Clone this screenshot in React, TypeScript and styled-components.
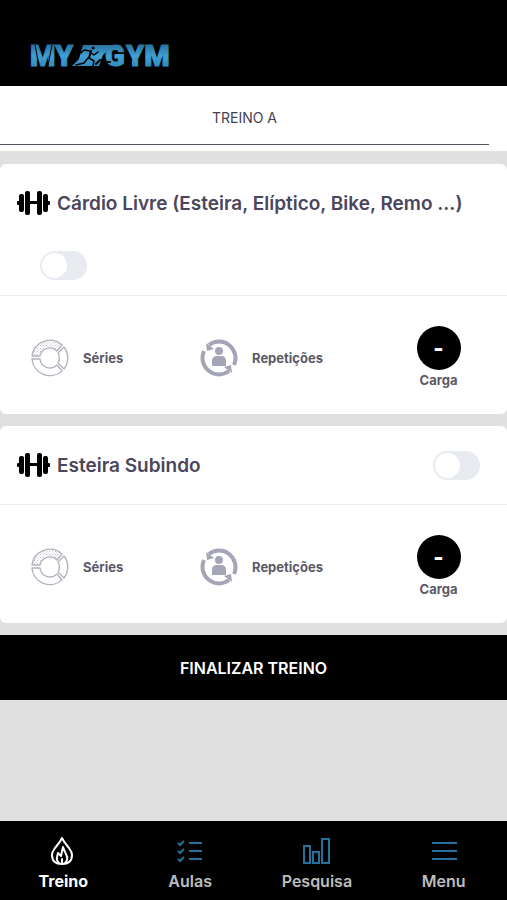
import React from "react";
import styled, { createGlobalStyle } from "styled-components";

const GlobalStyle = createGlobalStyle`
  *, *::before, *::after { box-sizing: border-box; }
  body {
    margin: 0;
    background: #e0e0e0;
    color: #4b465c;
    font-family: Inter, Roboto, "Liberation Sans", sans-serif;
  }
  button, input { font: inherit; }
`;

const Page = styled.div`
  min-height: 100vh;
  display: flex;
  flex-direction: column;
`;

const Header = styled.header`
  display: flex;
  align-items: flex-end;
  background: #000;
  height: 86px;
  padding: 0 28px 10px;
`;

const LogoSvg = styled.svg`
  display: block;
  font-family: Roboto, sans-serif;
  font-weight: 900;
  font-size: 29px;
`;

const Tabs = styled.nav`
  background: #fff;
  padding: 0 18px 6px 0;
`;

const Tab = styled.button`
  display: block;
  width: 100%;
  padding: 22px 0 16px;
  border: 0;
  border-bottom: 1px solid #55515f;
  background: none;
  color: #45424f;
  font-size: 14px;
  line-height: 20px;
  cursor: pointer;
`;

const Workout = styled.main`
  display: flex;
  flex-direction: column;
  gap: 12px;
  padding: 13px 0 12px;
`;

const Card = styled.section`
  background: #fff;
  border-radius: 6px;
`;

const CardHeader = styled.div`
  display: flex;
  flex-wrap: wrap;
  align-items: center;
  justify-content: space-between;
  padding: 0 27px 0 16px;
  border-bottom: 1px solid #ececee;
`;

const Title = styled.h2`
  display: flex;
  align-items: center;
  gap: 6px;
  min-height: 78px;
  margin: 0;
  font-size: 19px;
  line-height: 26px;
  font-weight: 600;
  svg { flex: none; }
`;

const TitleText = styled.span`
  padding-top: 2px;
`;

const Switch = styled.input<{ $below?: boolean }>`
  appearance: none;
  flex: none;
  width: 47px;
  height: 29px;
  margin: ${(p) => (p.$below ? "9px 0 15px 24px" : "0")};
  padding: 2px;
  border-radius: 15px;
  background: #e8ebf0;
  cursor: pointer;
  &::before {
    content: "";
    display: block;
    width: 25px;
    height: 25px;
    border-radius: 50%;
    background: #fff;
  }
  &:checked { background: #2782b5; }
  &:checked::before { margin-left: auto; }
`;

const Stats = styled.div`
  display: grid;
  grid-template-columns: repeat(3, 1fr);
  padding: 30px 0 24px;
`;

const Stat = styled.div`
  display: flex;
  align-items: center;
  gap: 14px;
  padding-left: 31px;
`;

const Load = styled.div`
  display: flex;
  flex-direction: column;
  align-items: center;
  padding-left: 32px;
`;

const StatLabel = styled.span`
  color: #5c5967;
  font-size: 13px;
  line-height: 20px;
  font-weight: 700;
`;

const LoadButton = styled.button`
  width: 44px;
  height: 44px;
  padding: 0;
  border: 0;
  border-radius: 50%;
  background: #000;
  color: #fff;
  font-size: 22px;
  line-height: 44px;
  font-weight: 800;
  cursor: pointer;
`;

const FinishButton = styled.button`
  width: 100%;
  height: 65px;
  padding: 0;
  border: 0;
  background: #000;
  color: #fff;
  font-size: 16px;
  font-weight: 600;
  cursor: pointer;
`;

const BottomNav = styled.nav`
  position: sticky;
  bottom: 0;
  display: grid;
  grid-template-columns: repeat(4, 1fr);
  margin-top: auto;
  height: 79px;
  background: #000;
`;

const NavLink = styled.a<{ $active?: boolean }>`
  display: flex;
  flex-direction: column;
  align-items: center;
  gap: 4px;
  padding-top: 15px;
  color: ${(p) => (p.$active ? "#fff" : "#bdbdbd")};
  font-size: 16px;
  line-height: 22px;
  font-weight: ${(p) => (p.$active ? 700 : 600)};
  text-decoration: none;
  svg { color: ${(p) => (p.$active ? "#fff" : "#24709c")}; }
`;

const Logo = () => (
  <LogoSvg width="148" height="40" viewBox="0 -8 148 40" role="img" aria-label="MY GYM">
    <defs>
      <linearGradient id="logoBlue" gradientUnits="userSpaceOnUse" x1="0" y1="0" x2="0" y2="24">
        <stop offset="0" stopColor="#276f9c" />
        <stop offset="0.5" stopColor="#40a0d4" />
        <stop offset="1" stopColor="#3089bb" />
      </linearGradient>
    </defs>
    <g fill="url(#logoBlue)">
      <g stroke="url(#logoBlue)" strokeWidth="1">
        <text x="2" y="22">MY</text>
        <text x="77" y="22">G</text>
        <text x="98" y="22">YM</text>
      </g>
      <path d="M55 1h38l-3 5H80l-5 5-4 11H44l7-7z" />
    </g>
    <g stroke="#000" strokeWidth="1">
      <path d="M7 1l4 21M20 22l4-21" />
    </g>
    <g fill="none" stroke="#000" strokeLinecap="round" strokeLinejoin="round">
      <circle cx="65" cy="4" r="1" fill="#000" strokeWidth="1" />
      <path strokeWidth="2" d="M63 7l-2 7" />
      <path strokeWidth="1.500" d="M62 7l-6-1-3 3M63 9l3 2 4-3M61 14l5 3-1 5M60 14l-4 5-8 2" />
      <path strokeWidth="2" d="M68 20l4-4h4l2 2h4" />
    </g>
  </LogoSvg>
);

const Dumbbell = () => (
  <svg width="35" height="26" viewBox="0 0 35 26" aria-hidden="true">
    <rect x="1" y="11" width="4" height="4" rx="1" />
    <rect x="30" y="11" width="4" height="4" rx="1" />
    <rect x="12" y="11" width="11" height="3" />
    <rect x="3" y="4" width="5" height="18" rx="2" />
    <rect x="27" y="4" width="5" height="18" rx="2" />
    <rect x="9" y="1" width="5" height="24" rx="2" />
    <rect x="21" y="1" width="5" height="24" rx="2" />
  </svg>
);

const SeriesIcon = () => (
  <svg width="38" height="38" viewBox="0 0 38 38" fill="none" stroke="#b3b4c0" strokeWidth="1.4" strokeLinejoin="round" aria-hidden="true">
    <defs>
      <pattern id="dots" width="3" height="3" patternUnits="userSpaceOnUse">
        <path d="M0 0h1v1H0zM1.500 1.500h1v1h-1z" fill="#c2c3cd" stroke="none" />
      </pattern>
    </defs>
    <path fill="url(#dots)" d="M1 17A18 18 0 0 1 31 6L26 12A10 10 0 0 0 9 17z" />
    <path d="M33 8A18 18 0 0 1 33 30L27 24A10 10 0 0 0 27 14z" />
    <path d="M1 20A18 18 0 0 0 31 32L26 26A10 10 0 0 1 9 20z" />
  </svg>
);

const RepeatIcon = () => (
  <svg width="38" height="38" viewBox="0 0 38 38" fill="#a5a5b8" aria-hidden="true">
    <g fill="none" stroke="#a5a5b8" strokeWidth="4">
      <path d="M9 6A16.500 16.500 0 0 1 34 26" />
      <path d="M29 32A16.500 16.500 0 0 1 4 12" />
    </g>
    <path d="M6 4l1 8 7-2zM32 34l-1-8-7 2z" />
    <circle cx="19" cy="12" r="4" />
    <path d="M12 27v-5q0-5 5-5h4q5 0 5 5v5z" />
  </svg>
);

const FlameIcon = () => (
  <svg width="30" height="30" viewBox="0 0 30 30" fill="none" stroke="currentColor" strokeWidth="2" strokeLinejoin="round" strokeLinecap="round" aria-hidden="true">
    <path d="M14 2Q12 6 7 12Q4 16 4 19Q4 28 14 28T24 19Q24 16 21 12Q16 6 14 2z" />
    <path d="M11 27Q8 24 9 21L10 17L13 20L15 11Q17 16 18 18Q21 24 17 27" />
    <path d="M14 27v-4" />
  </svg>
);

const ChecklistIcon = () => (
  <svg width="30" height="30" viewBox="0 0 30 30" fill="none" stroke="currentColor" strokeWidth="2" aria-hidden="true">
    <path d="M14 7h13M14 15h13M14 23h13M3 7l2 2 4-4M3 15l2 2 4-4M3 23l2 2 4-4" />
  </svg>
);

const ChartIcon = () => (
  <svg width="30" height="30" viewBox="0 0 30 30" fill="none" stroke="currentColor" strokeWidth="2" aria-hidden="true">
    <path d="M2 10h6v17H2zM11 16h6v11h-6zM20 3h7v24h-7z" />
  </svg>
);

const MenuIcon = () => (
  <svg width="30" height="30" viewBox="0 0 30 30" fill="none" stroke="currentColor" strokeWidth="2" aria-hidden="true">
    <path d="M3 7h25M3 15h25M3 23h25" />
  </svg>
);

interface ExerciseProps {
  id: string;
  name: string;
  switchBelow?: boolean;
}

const Exercise = ({ id, name, switchBelow }: ExerciseProps) => (
  <Card>
    <CardHeader>
      <Title id={id}>
        <Dumbbell />
        <TitleText>{name}</TitleText>
      </Title>
      <Switch type="checkbox" role="switch" aria-labelledby={id} $below={switchBelow} />
    </CardHeader>
    <Stats>
      <Stat>
        <SeriesIcon />
        <StatLabel>Séries</StatLabel>
      </Stat>
      <Stat>
        <RepeatIcon />
        <StatLabel>Repetições</StatLabel>
      </Stat>
      <Load>
        <LoadButton type="button" aria-describedby={`${id}-load`}>-</LoadButton>
        <StatLabel id={`${id}-load`}>Carga</StatLabel>
      </Load>
    </Stats>
  </Card>
);

export default function App() {
  return (
    <>
      <GlobalStyle />
      <Page>
        <Header>
          <Logo />
        </Header>
        <Tabs>
          <Tab type="button">TREINO A</Tab>
        </Tabs>
        <Workout>
          <Exercise id="cardio" name="Cárdio Livre (Esteira, Elíptico, Bike, Remo ...)" switchBelow />
          <Exercise id="esteira" name="Esteira Subindo" />
        </Workout>
        <FinishButton type="button">FINALIZAR TREINO</FinishButton>
        <BottomNav>
          <NavLink href="#treino" $active>
            <FlameIcon />
            Treino
          </NavLink>
          <NavLink href="#aulas">
            <ChecklistIcon />
            Aulas
          </NavLink>
          <NavLink href="#pesquisa">
            <ChartIcon />
            Pesquisa
          </NavLink>
          <NavLink href="#menu">
            <MenuIcon />
            Menu
          </NavLink>
        </BottomNav>
      </Page>
    </>
  );
}
